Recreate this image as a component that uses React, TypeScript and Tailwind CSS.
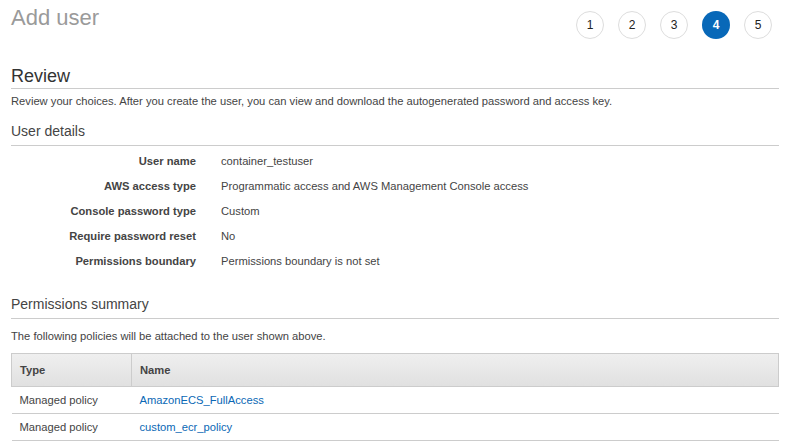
const details = [
  { label: 'User name', value: 'container_testuser' },
  { label: 'AWS access type', value: 'Programmatic access and AWS Management Console access' },
  { label: 'Console password type', value: 'Custom' },
  { label: 'Require password reset', value: 'No' },
  { label: 'Permissions boundary', value: 'Permissions boundary is not set' },
];

const policies = [
  { type: 'Managed policy', name: 'AmazonECS_FullAccess' },
  { type: 'Managed policy', name: 'custom_ecr_policy' },
];

function StepDots({ current }: { current: number }) {
  return (
    <div className="flex gap-[14px] pr-[7px] pt-[11px]">
      {[1, 2, 3, 4, 5].map((n) =>
        n === current ? (
          <div
            key={n}
            className="flex h-[28px] w-[28px] items-center justify-center rounded-full bg-[#0868b8] text-[12px] font-bold text-white"
          >
            {n}
          </div>
        ) : (
          <div
            key={n}
            className="flex h-[28px] w-[28px] items-center justify-center rounded-full border border-[#dddddd] bg-white text-[12px] text-[#222]"
          >
            {n}
          </div>
        )
      )}
    </div>
  );
}

export default function App() {
  return (
    <div className="h-[445px] w-[786px] overflow-hidden bg-white font-['Liberation_Sans',Arial,sans-serif] text-[11.2px] text-[#444]">
      <div className="w-[779px] pl-[11px]">
        {/* Header */}
        <div className="flex items-start justify-between">
          <h1 className="pt-[5px] text-[22px] leading-[26px] text-[#9a9a9a]">Add user</h1>
          <StepDots current={4} />
        </div>

        {/* Review */}
        <h2 className="mt-[26px] border-b border-[#cccccc] pb-[1px] text-[18px] leading-[22px] text-[#333]">Review</h2>
        <p className="mt-[4px] leading-[16px]">
          Review your choices. After you create the user, you can view and download the autogenerated password and access key.
        </p>

        {/* User details */}
        <h3 className="mt-[13px] border-b border-[#cccccc] pb-[5px] text-[14px] leading-[18px] text-[#444]">User details</h3>
        <div className="mt-[2px] flex flex-col">
          {details.map((d) => (
            <div key={d.label} className="flex h-[25px] items-center leading-[16px]">
              <div className="w-[185px] text-right font-bold">{d.label}</div>
              <div className="pl-[25px]">{d.value}</div>
            </div>
          ))}
        </div>

        {/* Permissions summary */}
        <h3 className="mt-[22px] border-b border-[#cccccc] pb-[5px] text-[14px] leading-[18px] text-[#444]">Permissions summary</h3>
        <p className="mt-[9px] leading-[16px]">The following policies will be attached to the user shown above.</p>

        <table className="mt-[9px] w-full border-collapse">
          <thead>
            <tr className="h-[33px] bg-gradient-to-b from-[#efefef] to-[#e0e0e0]">
              <th className="w-[120px] border border-[#cccccc] px-[8px] py-0 text-left font-bold">Type</th>
              <th className="border border-[#cccccc] px-[8px] py-0 text-left font-bold">Name</th>
            </tr>
          </thead>
          <tbody>
            {policies.map((p) => (
              <tr key={p.name} className="h-[27px] border-b border-[#cccccc]">
                <td className="px-[8px] py-0">{p.type}</td>
                <td className="px-[8px] py-0 text-[#0a68b5]">{p.name}</td>
              </tr>
            ))}
          </tbody>
        </table>
      </div>
    </div>
  );
}
